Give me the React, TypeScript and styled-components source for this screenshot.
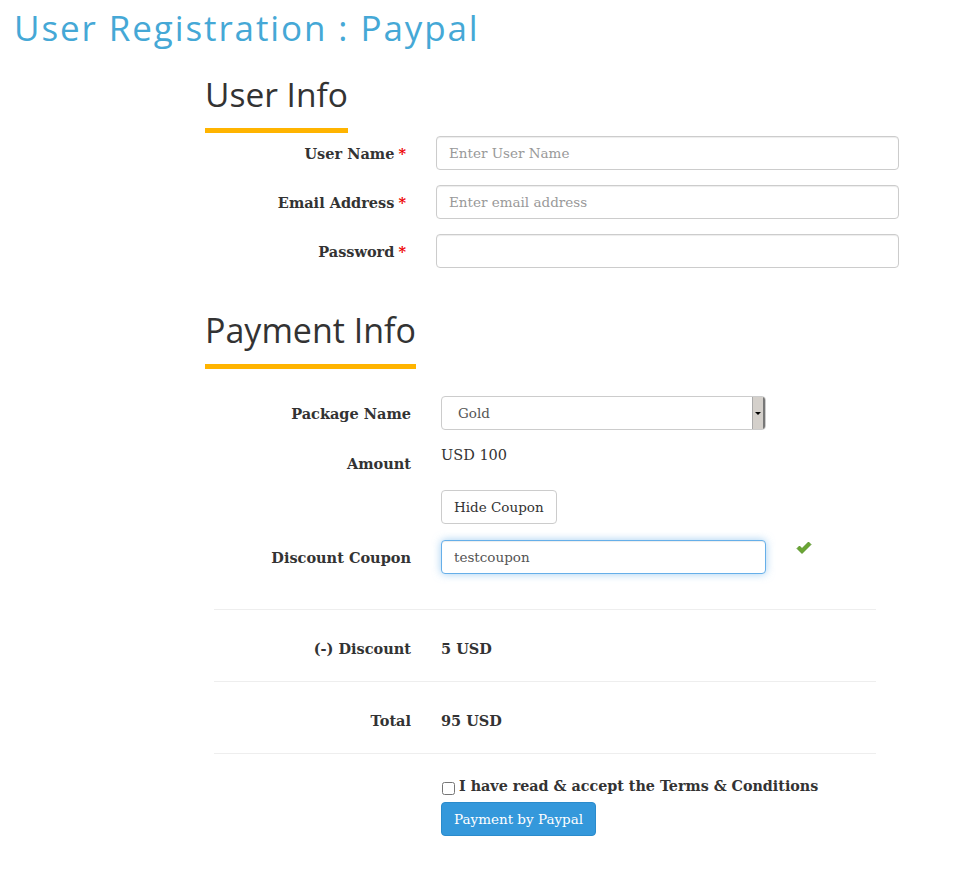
import React from "react";
import styled, { createGlobalStyle } from "styled-components";

const Global = createGlobalStyle`
  body { margin: 0; background: #fff; font-family: "DejaVu Serif", serif; color: #333; }
  * { box-sizing: border-box; }
`;

const Page = styled.div`
  padding: 6px 0 30px 14px;
`;

const Title = styled.h1`
  margin: 0;
  font-family: "Open Sans", sans-serif;
  font-weight: 400;
  font-size: 35px;
  line-height: 44px;
  color: #45a8d6;
  letter-spacing: 1.9px;
`;

const Section = styled.div`
  margin-left: 191px;
  width: 700px;
`;

const Heading = styled.h2<{ $top: number }>`
  display: inline-block;
  margin: ${(p) => p.$top}px 0 0 0;
  font-family: "Open Sans", sans-serif;
  font-weight: 400;
  font-size: ${(p) => (p.$top > 30 ? 34 : 33.5)}px;
  line-height: 40px;
  color: #333;
  padding-bottom: 14px;
  border-bottom: 5px solid #ffb400;
`;

const Form = styled.div<{ $top: number }>`
  display: grid;
  grid-template-columns: 201px 463px;
  column-gap: 30px;
  row-gap: 15px;
  margin-top: ${(p) => p.$top}px;
`;

const Label = styled.label`
  font-family: "DejaVu Serif", serif;
  font-weight: 700;
  font-size: 14.5px;
  text-align: right;
  align-self: center;
  color: #333;
`;

const Star = styled.span`
  color: #e00;
  margin-left: 4px;
`;

const Input = styled.input<{ $focus?: boolean }>`
  height: 34px;
  width: 100%;
  border: 1px solid ${(p) => (p.$focus ? "#66afe9" : "#ccc")};
  border-radius: 4px;
  padding: 6px 12px;
  font-family: "DejaVu Serif", serif;
  font-size: 13.5px;
  color: #555;
  box-shadow: ${(p) =>
    p.$focus
      ? "inset 0 1px 1px rgba(0,0,0,.075), 0 0 8px rgba(102,175,233,.6)"
      : "inset 0 1px 1px rgba(0,0,0,.075)"};
  outline: none;
  &::placeholder { color: #999; }
`;

const PayGrid = styled.div`
  display: grid;
  grid-template-columns: 206px 1fr;
  column-gap: 30px;
  margin-top: 27px;
`;

const PayLabel = styled.div<{ $h: number; $shift?: number }>`
  font-family: "DejaVu Serif", serif;
  font-weight: 700;
  font-size: 14.5px;
  text-align: right;
  height: ${(p) => p.$h}px;
  padding-top: ${(p) => p.$shift ?? 0}px;
  display: flex;
  align-items: center;
  justify-content: flex-end;
  color: #333;
`;

const PayCell = styled.div<{ $h: number; $top?: boolean }>`
  height: ${(p) => p.$h}px;
  display: flex;
  align-items: ${(p) => (p.$top ? "flex-start" : "center")};
  gap: 30px;
`;

const SelectBox = styled.div`
  width: 325px;
  height: 34px;
  border: 1px solid #ccc;
  border-radius: 4px;
  display: flex;
  align-items: stretch;
  overflow: hidden;
`;

const SelectText = styled.div`
  flex: 1;
  padding-left: 16px;
  display: flex;
  align-items: center;
  font-family: "DejaVu Serif", serif;
  font-size: 13.5px;
  color: #555;
`;

const SelectArrow = styled.div`
  width: 13px;
  background: #d4d0cb;
  border-left: 1px solid #aaa;
  border-right: 2px solid #777;
  display: flex;
  align-items: center;
  justify-content: center;
  &::after {
    content: "";
    border-left: 3px solid transparent;
    border-right: 3px solid transparent;
    border-top: 3px solid #000;
  }
`;

const Value = styled.div<{ $pad?: number }>`
  font-family: "DejaVu Serif", serif;
  font-size: 14.5px;
  color: #333;
  padding-top: ${(p) => p.$pad ?? 0}px;
`;

const BoldValue = styled(Value)`
  font-weight: 700;
`;

const Button = styled.button`
  height: 34px;
  padding: 0 12px;
  background: #fff;
  border: 1px solid #ccc;
  border-radius: 4px;
  font-family: "DejaVu Serif", serif;
  font-size: 13.5px;
  color: #333;
`;

const CouponInput = styled(Input)`
  width: 325px;
`;

const CheckIcon = styled.svg`
  margin-top: 1px;
  flex: none;
`;

const Spacer = styled.div`
  grid-column: 1 / -1;
  height: 35px;
`;

const Rule = styled.div`
  grid-column: 1 / -1;
  margin-left: 9px;
  width: 662px;
  height: 1px;
  background: #eee;
`;

const Terms = styled.label`
  display: flex;
  align-items: center;
  gap: 4px;
  font-family: "DejaVu Serif", serif;
  font-weight: 700;
  font-size: 14.3px;
  color: #333;
  margin-top: 22px;
`;

const Check = styled.input`
  width: 13px;
  height: 13px;
  margin: 6px 0 0 1px;
`;

const PrimaryButton = styled.button`
  margin-top: 7px;
  height: 34px;
  padding: 0 12px;
  background: #3498db;
  border: 1px solid #2a8bcc;
  border-radius: 4px;
  font-family: "DejaVu Serif", serif;
  font-size: 13.5px;
  color: #fff;
`;

const Bottom = styled.div`
  grid-column: 2;
  display: flex;
  flex-direction: column;
  align-items: flex-start;
`;

export default function App() {
  return (
    <Page>
      <Global />
      <Title>User Registration : Paypal</Title>
      <Section>
        <Heading $top={24}>User Info</Heading>
        <Form $top={3}>
          <Label>User Name<Star>*</Star></Label>
          <Input placeholder="Enter User Name" />
          <Label>Email Address<Star>*</Star></Label>
          <Input placeholder="Enter email address" />
          <Label>Password<Star>*</Star></Label>
          <Input type="password" />
        </Form>
        <Heading $top={42}>Payment Info</Heading>
        <PayGrid>
          <PayLabel $h={34}>Package Name</PayLabel>
          <PayCell $h={34}>
            <SelectBox>
              <SelectText>Gold</SelectText>
              <SelectArrow />
            </SelectBox>
          </PayCell>
          <PayLabel $h={60} $shift={6}>Amount</PayLabel>
          <PayCell $h={60} $top>
            <Value $pad={17}>USD 100</Value>
          </PayCell>
          <div />
          <PayCell $h={50} $top>
            <Button>Hide Coupon</Button>
          </PayCell>
          <PayLabel $h={34}>Discount Coupon</PayLabel>
          <PayCell $h={34} $top>
            <CouponInput $focus defaultValue="testcoupon" />
            <CheckIcon width="16" height="14" viewBox="0 0 16 14">
              <path d="M1 7.5 L3.5 5 L6 7.5 L12.5 1 L15 3.5 L6 12.5 Z" fill="#6aa632" stroke="#4e8a22" strokeWidth="0.8" />
            </CheckIcon>
          </PayCell>
          <Spacer />
          <Rule />
          <PayLabel $h={71} $shift={6}>(-) Discount</PayLabel>
          <PayCell $h={71}><BoldValue $pad={6}>5 USD</BoldValue></PayCell>
          <Rule />
          <PayLabel $h={71} $shift={6}>Total</PayLabel>
          <PayCell $h={71}><BoldValue $pad={6}>95 USD</BoldValue></PayCell>
          <Rule />
          <Bottom>
            <Terms><Check type="checkbox" />I have read &amp; accept the Terms &amp; Conditions</Terms>
            <PrimaryButton>Payment by Paypal</PrimaryButton>
          </Bottom>
        </PayGrid>
      </Section>
    </Page>
  );
}
